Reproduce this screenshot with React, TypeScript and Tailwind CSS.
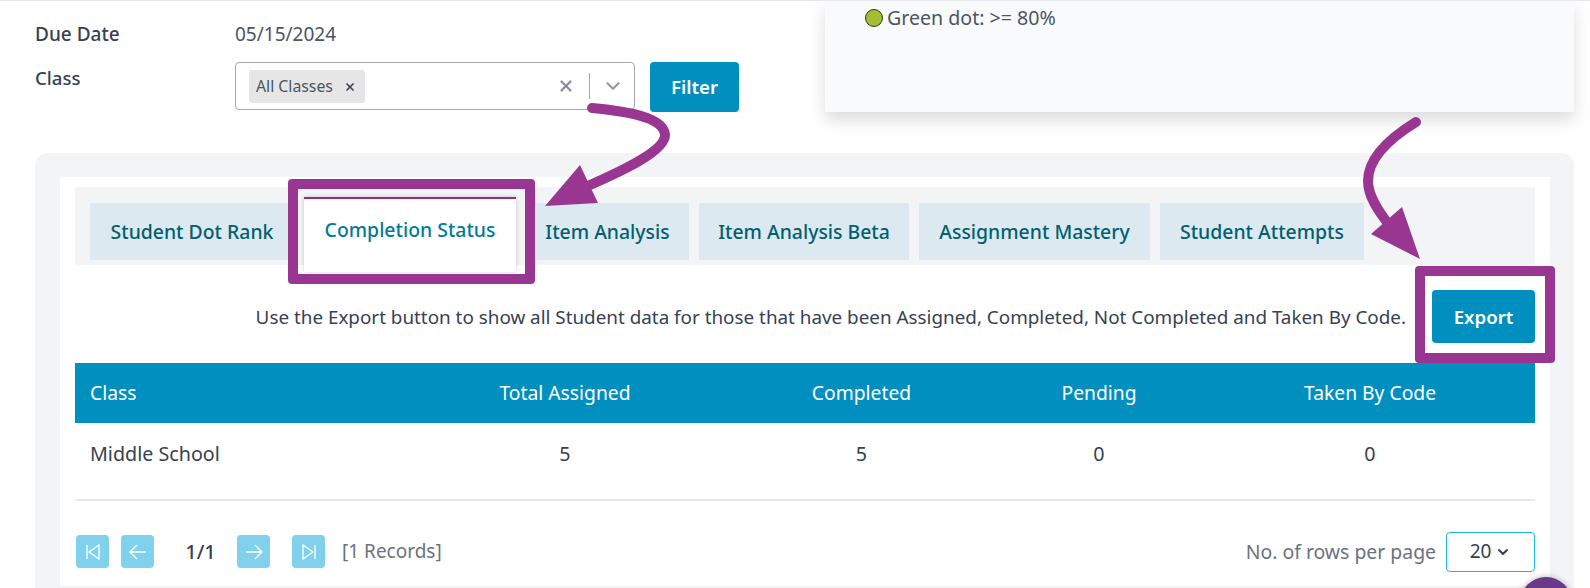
import { ChevronDown, X } from "lucide-react";

const tabs = [
  { label: "Student Dot Rank", width: "w-[204px]" },
  { label: "Completion Status", width: "w-[212px]" },
  { label: "Item Analysis", width: "w-[163px]" },
  { label: "Item Analysis Beta", width: "w-[210px]" },
  { label: "Assignment Mastery", width: "w-[231px]" },
  { label: "Student Attempts", width: "w-[204px]" },
];

function PagerButton({ d }: { d: string }) {
  return (
    <button className="flex h-[33px] w-[33px] items-center justify-center rounded-[4px] bg-[#80d2ec]">
      <svg width="22" height="22" viewBox="0 0 22 22" fill="none" stroke="#ffffff" strokeWidth="1.3">
        <path d={d} />
      </svg>
    </button>
  );
}

function Annotations() {
  return (
    <>
      <div className="absolute left-[288px] top-[178px] h-[105px] w-[247px] rounded-[4px] border-[10px] border-[#993692]" />
      <div className="absolute left-[1415px] top-[265px] h-[97px] w-[140px] rounded-[4px] border-[10px] border-[#993692]" />
      <svg className="absolute left-0 top-0 h-[588px] w-[1590px]" viewBox="0 0 1590 588" fill="none">
        <path d="M592 107 C625 110 664 116 665 134 C665 150 622 170 590 184" stroke="#993692" strokeWidth="10" strokeLinecap="round" />
        <path d="M580 164 L545 205 L598 202 Z" fill="#993692" />
        <path d="M1416 121 C1385 140 1368 160 1368 180 C1368 195 1378 210 1390 225" stroke="#993692" strokeWidth="10" strokeLinecap="round" />
        <path d="M1402 206 L1371 233 L1420 258 Z" fill="#993692" />
      </svg>
    </>
  );
}

export default function App() {
  return (
    <div className="relative h-[588px] w-[1590px] overflow-hidden border-t border-[#e5e7eb] bg-white font-['Noto_Sans',sans-serif] text-[#374151]">
      <div className="flex h-[152px] pl-[35px] pr-[16px]">
        <div className="flex-1">
          <div className="flex h-[61px] items-start pt-[21px] text-[19px] leading-[24px]">
            <span className="w-[200px] font-medium text-[#374151]">Due Date</span>
            <span className="text-[#4b5563]">05/15/2024</span>
          </div>
          <div className="flex items-start">
            <span className="w-[200px] pt-[4px] text-[18.6px] font-medium leading-[24px]">Class</span>
            <div className="flex h-[48px] w-[400px] items-center rounded-[4px] border border-[#a9a6b8] pl-[13px]">
              <span className="flex h-[33px] w-[116px] items-center gap-[11px] rounded-[3px] bg-[#e6e6e6] pl-[7px] pt-px text-[15.8px] text-[#4b5563]">
                All Classes
                <X size={12} strokeWidth={3.5} className="text-[#3f4560]" />
              </span>
              <X size={18} strokeWidth={3} className="ml-[192px] text-[#8b8b9b]" />
              <span className="ml-[14px] h-[26px] w-px bg-[#a9a6b8]" />
              <ChevronDown size={22} strokeWidth={2.5} className="ml-[12px] text-[#9a9aa8]" />
            </div>
            <button className="ml-[15px] h-[50px] w-[89px] rounded-[4px] bg-[#008fbe] text-[18.6px] font-semibold text-white">Filter</button>
          </div>
        </div>
        <div className="h-[111px] w-[749px] bg-[#f9fafc] pl-[40px] pt-[6px] shadow-[0_8px_16px_rgba(0,0,0,0.14)]">
          <div className="flex items-center gap-[4px] text-[19.6px] leading-[22px] text-[#4b5563]">
            <span className="h-[18px] w-[18px] rounded-full border border-[#2f3a10] bg-[#a4bd32]" />
            Green dot: &gt;= 80%
          </div>
        </div>
      </div>

      <div className="ml-[35px] mr-[16px] h-[440px] rounded-t-[12px] bg-[#f3f4f6] pl-[25px] pr-[24px] pt-[24px]">
        <div className="h-[409px] bg-white px-[15px] pt-[10px]">
          <div className="flex h-[78px] items-start gap-[10px] bg-[#f3f4f6] pl-[15px] pt-[16px]">
            {tabs.map((tab, i) =>
              i === 1 ? (
                <div key={tab.label} className={`relative -mt-[6px] h-[75px] ${tab.width} border-t-2 border-[#a0288c] bg-white pt-[18px] text-center text-[19.4px] font-medium leading-[26px] text-[#007b96] shadow-[0_0_4px_rgba(0,0,0,0.2)]`}>
                  {tab.label}
                </div>
              ) : (
                <div key={tab.label} className={`flex h-[57px] ${tab.width} items-center justify-center bg-[#dce9f0] pt-px text-[19.4px] font-medium text-[#00606f]`}>
                  {tab.label}
                </div>
              )
            )}
          </div>
          <div className="flex h-[98px] items-center justify-end">
            <p className="mt-[6px] text-[18.85px] text-[#374151]">Use the Export button to show all Student data for those that have been Assigned, Completed, Not Completed and Taken By Code.</p>
            <button className="ml-[26px] mt-[5px] h-[53px] w-[103px] rounded-[4px] bg-[#008fbe] text-[18.6px] font-semibold text-white">Export</button>
          </div>
          <table className="w-full table-fixed border-b-2 border-[#e9e8f0] text-[19.7px]">
            <thead>
              <tr className="h-[60px] bg-[#008fbe] text-[19.3px] text-white">
                <th className="w-[320px] pl-[15px] text-left font-normal">Class</th>
                <th className="w-[340px] font-normal">Total Assigned</th>
                <th className="w-[253px] font-normal">Completed</th>
                <th className="w-[222px] font-normal">Pending</th>
                <th className="pr-[5px] font-normal">Taken By Code</th>
              </tr>
            </thead>
            <tbody>
              <tr className="h-[77px] text-center text-[#374151]">
                <td className="pb-[14px] pl-[15px] text-left">Middle School</td>
                <td className="pb-[14px]">5</td>
                <td className="pb-[14px]">5</td>
                <td className="pb-[14px]">0</td>
                <td className="pb-[14px] pr-[5px]">0</td>
              </tr>
            </tbody>
          </table>
          <div className="flex items-center pl-px pt-[34px] text-[19px]">
            <PagerButton d="M5 4 V18 M17 4 V18 L7 11 Z" />
            <div className="ml-[12px]"><PagerButton d="M19 11 H3 M10 4 L3 11 L10 18" /></div>
            <span className="w-[83px] pl-[10px] text-center text-[20px] font-medium">1/1</span>
            <PagerButton d="M3 11 H19 M12 4 L19 11 L12 18" />
            <div className="ml-[22px]"><PagerButton d="M17 4 V18 M5 4 V18 L15 11 Z" /></div>
            <span className="ml-[17px] text-[#6b7280]">[1 Records]</span>
            <span className="ml-auto text-[19.4px] text-[#6b7280]">No. of rows per page</span>
            <div className="-my-[4px] ml-[10px] flex h-[40px] w-[89px] items-center justify-center gap-[4px] rounded-[4px] border border-[#1fb5e0]">
              20
              <ChevronDown size={16} strokeWidth={3} />
            </div>
          </div>
        </div>
      </div>

      <Annotations />
      <div className="absolute left-[1520px] top-[576px] h-[52px] w-[52px] rounded-full bg-[#6a3a8a] shadow-[0_0_6px_rgba(0,0,0,0.3)]" />
    </div>
  );
}
